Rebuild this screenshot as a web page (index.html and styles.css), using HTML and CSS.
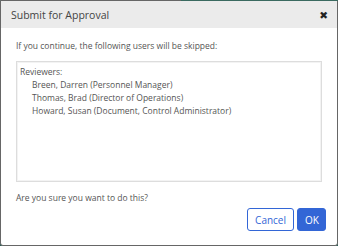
FILE: index.html
```html
<!DOCTYPE html>
<html lang="en">

<head>
  <meta charset="UTF-8">
  <title>Submit for Approval</title>
  <link rel="stylesheet" href="styles.css">
</head>

<body>
  <div class="dialog">
    <header class="dialog-header">
      <h2 class="dialog-title">Submit for Approval</h2>
      <span class="dialog-close">&#10006;</span>
    </header>
    <section class="dialog-body">
      <p class="intro">If you continue, the following users will be skipped:</p>
      <div class="user-box">
        <p>Reviewers:</p>
        <ul class="user-list">
          <li>Breen, Darren (Personnel Manager)</li>
          <li>Thomas, Brad (Director of Operations)</li>
          <li>Howard, Susan (Document, Control Administrator)</li>
        </ul>
      </div>
      <p class="question">Are you sure you want to do this?</p>
    </section>
    <footer class="dialog-footer">
      <button class="btn btn-cancel">Cancel</button>
      <button class="btn btn-ok">OK</button>
    </footer>
  </div>
</body>

</html>
```

FILE: styles.css
```css
html {
  box-sizing: border-box;
  font-family: 'Open Sans', sans-serif;
  font-size: 16px;
}

*,
*:before,
*::after {
  box-sizing: inherit;
}

body {
  margin: 0;
  background-color: #2f5d55;
}

.dialog {
  position: relative;
  width: 338px;
  height: 246px;
  display: flex;
  flex-direction: column;
  background-color: #fff;
  border: 1px solid #666;
  border-radius: 0 0 3px 3px;
}

/* strip of the page behind, seen at the top edge */
.dialog:before {
  content: "";
  position: absolute;
  top: -1px;
  left: 180px;
  right: -1px;
  height: 1px;
  background-color: #3a6a60;
}

.dialog-header {
  display: flex;
  align-items: center;
  justify-content: space-between;
  height: 27px;
  padding: 0 9px 0 10px;
  background-color: #ebebeb;
}

.dialog-title {
  margin: 0;
  font-size: 10.5px;
  font-weight: normal;
  color: #444;
}

.dialog-close {
  font-family: 'DejaVu Sans', sans-serif;
  font-size: 10.5px;
  font-weight: bold;
  color: #222;
}

.dialog-body {
  flex: 1;
  padding: 12px 15px 0;
  font-size: 8.5px;
  color: #555;
}

.intro {
  margin: 0 0 10px;
}

.user-box {
  height: 121px;
  padding: 3px 3px;
  border: 1px solid #ddd;
  box-shadow: inset 0 0 0 1px #f3f3f3;
  line-height: 13px;
}

.user-box p {
  margin: 0;
}

.user-list {
  margin: 0;
  padding-left: 12px;
  list-style: none;
}

.question {
  margin: 10px 0 0;
}

.dialog-footer {
  display: flex;
  justify-content: flex-end;
  gap: 3px;
  padding: 0 11px 14px;
}

.btn {
  height: 23px;
  padding: 0 7px;
  border: 1px solid #3366d6;
  border-radius: 3px;
  font-family: inherit;
  font-size: 10px;
}

.btn-cancel {
  background-color: #fff;
  color: #3366d6;
}

.btn-ok {
  width: 29px;
  background-color: #3366d6;
  color: #fff;
}
```
